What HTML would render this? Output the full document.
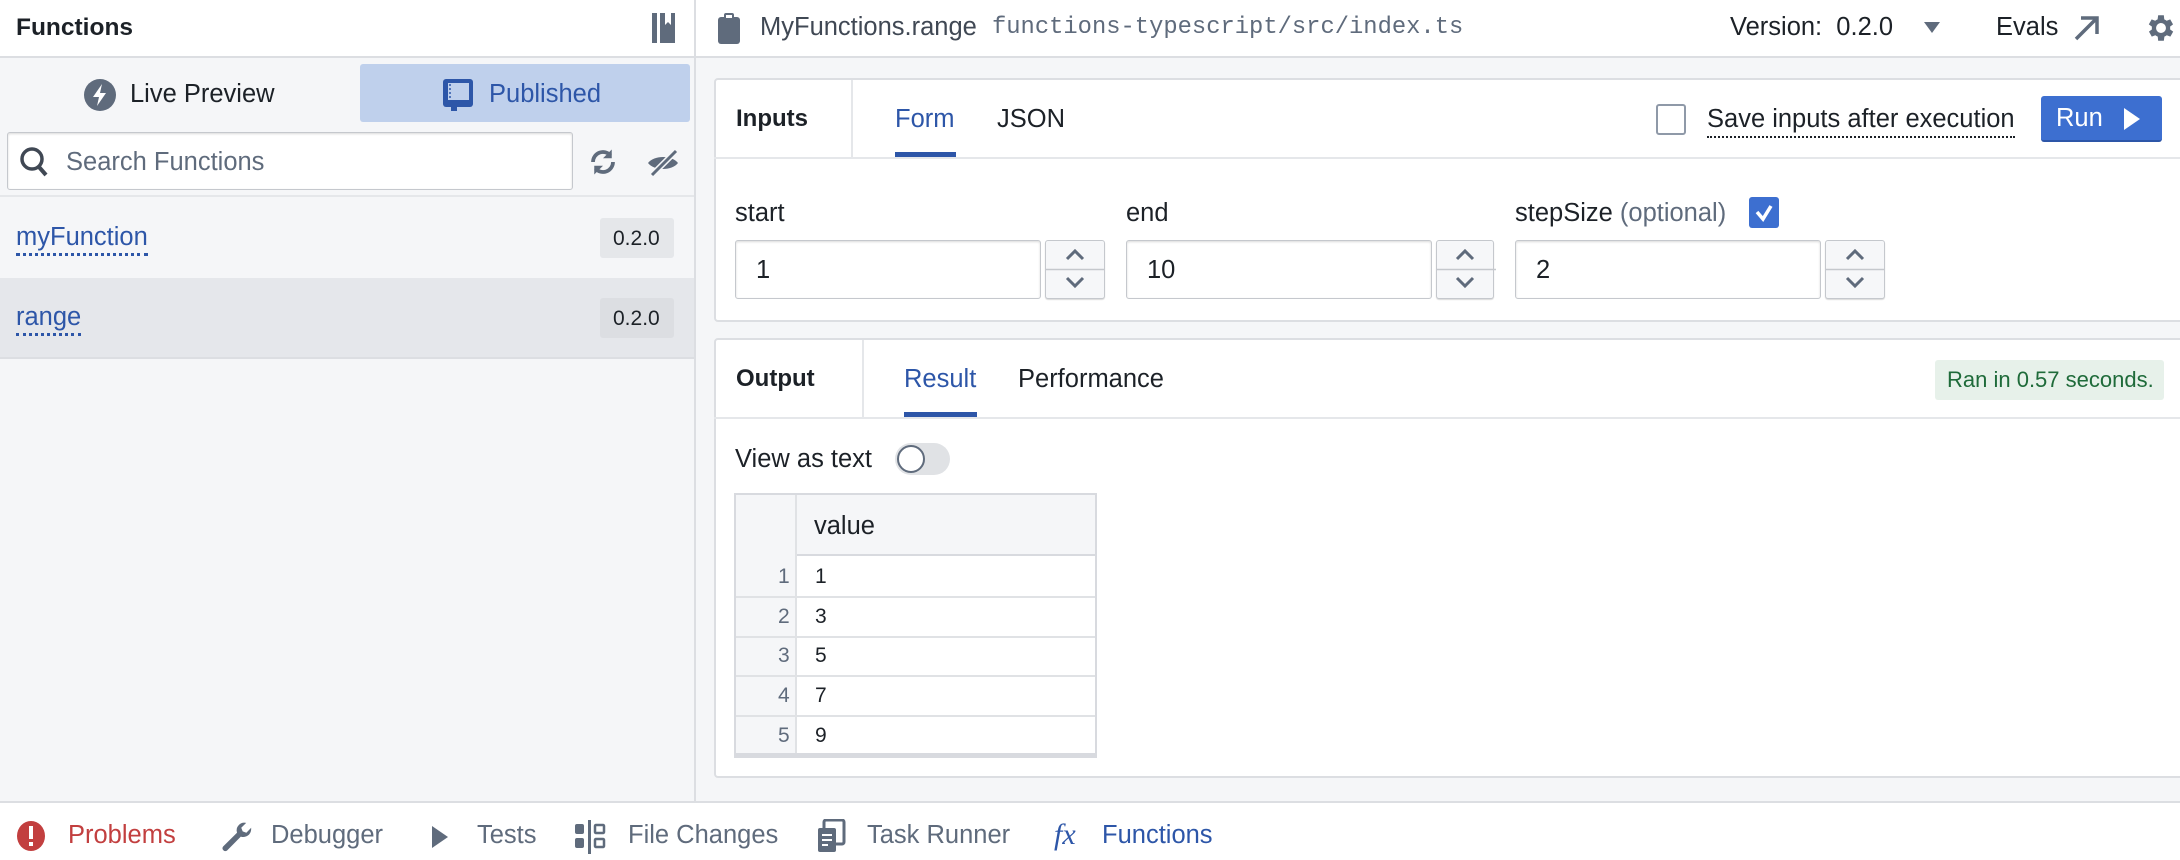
<!DOCTYPE html>
<html><head><meta charset="utf-8"><style>
*{box-sizing:border-box;margin:0;padding:0}
body{width:2180px;height:860px;overflow:hidden;background:#f5f6f8;font-family:"Liberation Sans",sans-serif;color:#1c2127;position:relative}
.a{position:absolute}
.t{position:absolute;white-space:nowrap;font-size:25.5px;line-height:1}
.mono{font-family:"Liberation Mono",monospace}
.inp{position:absolute;background:#fff;border:1px solid #c5c8cd;border-radius:3px;box-shadow:inset 0 1px 2px rgba(0,0,0,.15)}
.spin{position:absolute;background:#f6f7f9;border:1px solid #c5c8cd;border-radius:3px;box-shadow:0 1px 1px rgba(0,0,0,.15)}
</style></head><body>
<div class="a" style="left:0;top:0;width:2180px;height:58px;background:#fff;border-bottom:2px solid #dcdee2"></div>
<div class="t" style="left:16px;top:16px;font-weight:bold;font-size:24.5px">Functions</div>
<svg class="a" style="left:651px;top:12px" width="26" height="32" viewBox="0 0 26 32"><rect x="1" y="1" width="5" height="30" fill="#5f6b7c"/><path d="M9 1h15v30H9z" fill="#5f6b7c"/><path d="M14 1v12l3-3 3 3V1" fill="#fff"/></svg>
<div class="a" style="left:694px;top:0;width:2px;height:802px;background:#dcdee2"></div>
<svg class="a" style="left:717px;top:12px" width="24" height="32" viewBox="0 0 24 32"><rect x="1" y="5" width="22" height="27" rx="3" fill="#5f6b7c"/><rect x="7" y="1" width="10" height="8" rx="2" fill="#5f6b7c"/><rect x="9" y="3" width="6" height="3" fill="#fff"/></svg>
<div class="t" style="left:760px;top:15px;color:#404854">MyFunctions.range</div>
<div class="t mono" style="left:992px;top:16px;font-size:23.8px;color:#5f6b7c">functions-typescript/src/index.ts</div>
<div class="t" style="left:1730px;top:15px">Version:&nbsp;&nbsp;0.2.0</div>
<svg class="a" style="left:1924px;top:22px" width="16" height="12"><path d="M0 0h16L8 11z" fill="#5f6b7c"/></svg>
<div class="t" style="left:1996px;top:15px">Evals</div>
<svg class="a" style="left:2072px;top:14px" width="28" height="28" viewBox="0 0 28 28"><path d="M4 25L24 5M9 4h16v16" stroke="#5f6b7c" stroke-width="3.5" fill="none"/></svg>
<svg class="a" style="left:2144px;top:11px" width="34" height="34" viewBox="0 0 24 24"><path fill="#5f6b7c" d="M19.4 13a7.5 7.5 0 000-2l2.1-1.6-2-3.5-2.5 1a7 7 0 00-1.7-1L15 3h-4l-.4 2.9a7 7 0 00-1.7 1l-2.5-1-2 3.5L6.6 11a7.5 7.5 0 000 2l-2.1 1.6 2 3.5 2.5-1a7 7 0 001.7 1L11 21h4l.4-2.9a7 7 0 001.7-1l2.5 1 2-3.5zM13 15.5a3.5 3.5 0 110-7 3.5 3.5 0 010 7z" transform="translate(-1 0)"/></svg>
<svg class="a" style="left:84px;top:79px" width="32" height="32" viewBox="0 0 32 32"><circle cx="16" cy="16" r="16" fill="#5f6b7c"/><path d="M18 5l-9 13h6l-2 9 9-13h-6z" fill="#fff"/></svg>
<div class="t" style="left:130px;top:82px">Live Preview</div>
<div class="a" style="left:360px;top:64px;width:330px;height:58px;background:#bfd0ec;border-radius:3px"></div>
<svg class="a" style="left:443px;top:79px" width="30" height="32" viewBox="0 0 30 32"><rect x="0" y="0" width="30" height="28" rx="3" fill="#2d56a8"/><rect x="5" y="4" width="21" height="17" fill="#bfd0ec"/><path d="M7 5v15" stroke="#2d56a8" stroke-dasharray="2 2" stroke-width="1.5"/><rect x="8" y="28" width="6" height="4" fill="#2d56a8"/></svg>
<div class="t" style="left:489px;top:82px;color:#2d56a8">Published</div>
<div class="inp" style="left:7px;top:132px;width:566px;height:58px"></div>
<svg class="a" style="left:19px;top:146px" width="30" height="32" viewBox="0 0 30 32"><circle cx="13" cy="13" r="10" stroke="#404854" stroke-width="3.5" fill="none"/><path d="M20 21l7 8" stroke="#404854" stroke-width="4"/></svg>
<div class="t" style="left:66px;top:150px;color:#5f6b7c">Search Functions</div>
<svg class="a" style="left:588px;top:147px" width="30" height="30" viewBox="0 0 24 24"><path d="M4 12a8 8 0 0114-5.3M20 12a8 8 0 01-14 5.3" stroke="#5f6b7c" stroke-width="3" fill="none"/><path d="M19 2v7h-7zM5 22v-7h7z" fill="#5f6b7c"/></svg>
<svg class="a" style="left:646px;top:149px" width="34" height="28" viewBox="0 0 34 28"><path d="M2 14c6-8 24-8 30 0-6 8-24 8-30 0z" fill="#5f6b7c"/><path d="M6 26L30 2" stroke="#f5f6f8" stroke-width="6"/><path d="M6 26L30 2" stroke="#5f6b7c" stroke-width="3"/></svg>
<div class="a" style="left:0;top:195px;width:694px;height:2px;background:#e5e7ea"></div>
<div class="t" style="left:16px;top:225px;color:#2d56a8;border-bottom:3px dotted #2d56a8;padding-bottom:2px">myFunction</div>
<div class="a" style="left:600px;top:218px;width:74px;height:40px;background:#e5e7ea;border-radius:3px"></div>
<div class="t" style="left:613px;top:228px;font-size:21px">0.2.0</div>
<div class="a" style="left:0;top:278px;width:694px;height:81px;background:#e5e7eb;border-bottom:2px solid #dcdee2"></div>
<div class="t" style="left:16px;top:305px;color:#2d56a8;border-bottom:3px dotted #2d56a8;padding-bottom:2px">range</div>
<div class="a" style="left:600px;top:298px;width:74px;height:40px;background:#dcdee2;border-radius:3px"></div>
<div class="t" style="left:613px;top:308px;font-size:21px">0.2.0</div>
<div class="a" style="left:714px;top:78px;width:1480px;height:244px;background:#fff;border:2px solid #dcdee2;border-radius:4px"></div>
<div class="a" style="left:714px;top:157px;width:1466px;height:2px;background:#e5e7ea"></div>
<div class="a" style="left:851px;top:80px;width:2px;height:78px;background:#e5e7ea"></div>
<div class="t" style="left:736px;top:107px;font-weight:bold;font-size:24px">Inputs</div>
<div class="t" style="left:895px;top:107px;color:#2d56a8">Form</div>
<div class="a" style="left:895px;top:152px;width:61px;height:5px;background:#2d56a8"></div>
<div class="t" style="left:997px;top:107px">JSON</div>
<div class="a" style="left:1656px;top:104px;width:30px;height:31px;border:2px solid #8f99a8;border-radius:3px;background:#fff"></div>
<div class="t" style="left:1707px;top:107px;border-bottom:2px dotted #1c2127;padding-bottom:3px">Save inputs after execution</div>
<div class="a" style="left:2041px;top:96px;width:121px;height:46px;background:#3d6fd0;border-radius:3px;border-bottom:2px solid #2d56a8"></div>
<div class="t" style="left:2056px;top:106px;color:#fff">Run</div>
<svg class="a" style="left:2124px;top:108px" width="16" height="22"><path d="M0 0l16 11L0 22z" fill="#fff"/></svg>
<div class="t" style="left:735px;top:201px">start</div>
<div class="t" style="left:1126px;top:201px">end</div>
<div class="t" style="left:1515px;top:201px">stepSize <span style="color:#5f6b7c">(optional)</span></div>
<div class="a" style="left:1749px;top:197px;width:30px;height:31px;background:#3d6fd0;border-radius:3px"></div>
<svg class="a" style="left:1753px;top:202px" width="22" height="22"><path d="M4 10l6 7 8-13" stroke="#fff" stroke-width="3.5" fill="none"/></svg>
<div class="inp" style="left:735px;top:240px;width:306px;height:59px"></div><div class="t" style="left:756px;top:258px">1</div>
<div class="inp" style="left:1126px;top:240px;width:306px;height:59px"></div><div class="t" style="left:1147px;top:258px">10</div>
<div class="inp" style="left:1515px;top:240px;width:306px;height:59px"></div><div class="t" style="left:1536px;top:258px">2</div>
<div class="spin" style="left:1045px;top:240px;width:60px;height:59px"></div>
<div class="spin" style="left:1436px;top:240px;width:58px;height:59px"></div>
<div class="spin" style="left:1825px;top:240px;width:60px;height:59px"></div>
<svg class="a" style="left:1045px;top:240px" width="850" height="60">
<g stroke="#5f6b7c" stroke-width="3" fill="none">
<path d="M0 29.5h60M391 29.5h60M780 29.5h60" stroke="#c5c8cd" stroke-width="1.5"/>
<path d="M22 19l8-8 8 8M22 38l8 8 8-8"/>
<path d="M412 19l8-8 8 8M412 38l8 8 8-8"/>
<path d="M802 19l8-8 8 8M802 38l8 8 8-8"/>
</g></svg>
<div class="a" style="left:714px;top:338px;width:1480px;height:440px;background:#fff;border:2px solid #dcdee2;border-radius:4px"></div>
<div class="a" style="left:714px;top:417px;width:1466px;height:2px;background:#e5e7ea"></div>
<div class="a" style="left:862px;top:340px;width:2px;height:78px;background:#e5e7ea"></div>
<div class="t" style="left:736px;top:367px;font-weight:bold;font-size:24px">Output</div>
<div class="t" style="left:904px;top:367px;color:#2d56a8">Result</div>
<div class="a" style="left:904px;top:412px;width:73px;height:5px;background:#2d56a8"></div>
<div class="t" style="left:1018px;top:367px">Performance</div>
<div class="a" style="left:1935px;top:360px;width:229px;height:40px;background:#e7f1ea;border-radius:3px"></div>
<div class="t" style="left:1947px;top:369px;color:#1f6b3a;font-size:22px">Ran in 0.57 seconds.</div>
<div class="t" style="left:735px;top:447px">View as text</div>
<div class="a" style="left:895px;top:443px;width:55px;height:32px;background:#e0e2e5;border-radius:16px"></div>
<div class="a" style="left:897px;top:445px;width:28px;height:28px;background:#fff;border:2px solid #5f6b7c;border-radius:50%"></div>
<div class="a" style="left:734px;top:493px;width:363px;height:265px;background:#fff;border:2px solid #d8dadf;border-bottom-width:5px"></div>
<div class="a" style="left:736px;top:495px;width:359px;height:61px;background:#f5f6f8;border-bottom:2px solid #d8dadf"></div>
<div class="a" style="left:736px;top:495px;width:61px;height:258px;background:#f5f6f8;border-right:2px solid #e0e2e5"></div>
<div class="t" style="left:814px;top:514px">value</div>
<div class="a" style="left:736px;top:596px;width:359px;height:2px;background:#e0e2e5"></div>
<div class="a" style="left:736px;top:636px;width:359px;height:2px;background:#e0e2e5"></div>
<div class="a" style="left:736px;top:675px;width:359px;height:2px;background:#e0e2e5"></div>
<div class="a" style="left:736px;top:715px;width:359px;height:2px;background:#e0e2e5"></div>
<div class="t" style="left:778px;top:566px;font-size:21px;color:#5f6b7c">1</div><div class="t" style="left:815px;top:566px;font-size:21px">1</div>
<div class="t" style="left:778px;top:606px;font-size:21px;color:#5f6b7c">2</div><div class="t" style="left:815px;top:606px;font-size:21px">3</div>
<div class="t" style="left:778px;top:645px;font-size:21px;color:#5f6b7c">3</div><div class="t" style="left:815px;top:645px;font-size:21px">5</div>
<div class="t" style="left:778px;top:685px;font-size:21px;color:#5f6b7c">4</div><div class="t" style="left:815px;top:685px;font-size:21px">7</div>
<div class="t" style="left:778px;top:725px;font-size:21px;color:#5f6b7c">5</div><div class="t" style="left:815px;top:725px;font-size:21px">9</div>
<div class="a" style="left:0;top:801px;width:2180px;height:59px;background:#fff;border-top:2px solid #dcdee2"></div>
<svg class="a" style="left:16px;top:820px" width="30" height="32" viewBox="0 0 30 32"><ellipse cx="15" cy="16" rx="14" ry="15" fill="#c23f3f"/><rect x="13" y="6" width="4" height="13" fill="#fff"/><rect x="13" y="22" width="4" height="4" fill="#fff"/></svg>
<div class="t" style="left:68px;top:823px;color:#c23f3f">Problems</div>
<svg class="a" style="left:220px;top:820px" width="34" height="34" viewBox="0 0 24 24"><path fill="#5f6b7c" d="M22 6.5a5.5 5.5 0 01-7.3 5.2L5 21.5a2 2 0 01-2.8-2.8L12 9a5.5 5.5 0 016.5-7L15 5.5 16 8l2.6 1 3.4-3.5z"/></svg>
<div class="t" style="left:271px;top:823px;color:#5f6b7c">Debugger</div>
<svg class="a" style="left:432px;top:826px" width="16" height="22"><path d="M0 0l16 11L0 22z" fill="#5f6b7c"/></svg>
<div class="t" style="left:477px;top:823px;color:#5f6b7c">Tests</div>
<svg class="a" style="left:574px;top:820px" width="34" height="34" viewBox="0 0 34 34"><rect x="1" y="4" width="9" height="10" rx="2" fill="#5f6b7c"/><rect x="1" y="18" width="9" height="10" rx="2" fill="#5f6b7c"/><rect x="14" y="0" width="3" height="34" fill="#5f6b7c"/><rect x="21" y="5" width="9" height="8" rx="1" stroke="#5f6b7c" stroke-width="2.5" fill="none"/><rect x="21" y="19" width="9" height="8" rx="1" stroke="#5f6b7c" stroke-width="2.5" fill="none"/></svg>
<div class="t" style="left:628px;top:823px;color:#5f6b7c">File Changes</div>
<svg class="a" style="left:816px;top:819px" width="30" height="34" viewBox="0 0 30 34"><rect x="8" y="1" width="20" height="24" rx="2" stroke="#5f6b7c" stroke-width="3" fill="#fff"/><rect x="2" y="9" width="18" height="24" rx="2" fill="#5f6b7c"/><path d="M6 16h10M6 21h10M6 26h6" stroke="#fff" stroke-width="2"/></svg>
<div class="t" style="left:867px;top:823px;color:#5f6b7c">Task Runner</div>
<div class="t" style="left:1054px;top:820px;color:#2d56a8;font-family:'Liberation Serif',serif;font-style:italic;font-size:30px">fx</div>
<div class="t" style="left:1102px;top:823px;color:#2d56a8">Functions</div>
</body></html>
